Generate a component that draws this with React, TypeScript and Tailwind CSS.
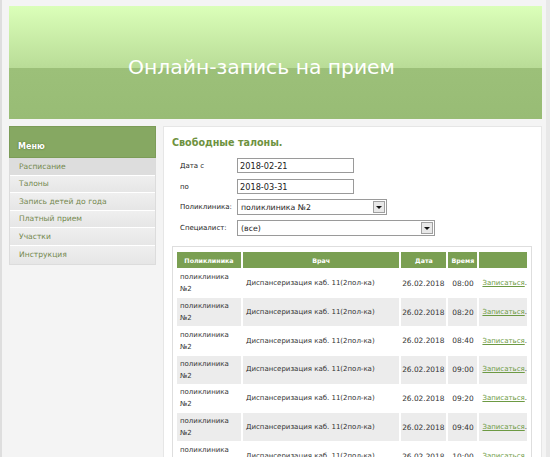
import React from "react";

const rows = ["08:00", "08:20", "08:40", "09:00", "09:20", "09:40", "10:00"];
const menu = ["Расписание", "Талоны", "Запись детей до года", "Платный прием", "Участки", "Инструкция"];

function Arrow() {
  return (
    <span className="absolute right-[1px] top-[1px] bottom-[1px] w-[12px] bg-[#e8e8e8] border border-[#a0a0a0] flex items-center justify-center">
      <svg width="6" height="3" viewBox="0 0 6 3"><path d="M0 0H6L3 3Z" fill="#111" /></svg>
    </span>
  );
}

export default function App() {
  return (
    <div className="w-[550px] h-[457px] overflow-hidden bg-[#f4f4f4] border-l-2 border-[#dedede] relative" style={{ fontFamily: '"DejaVu Sans", Verdana, sans-serif' }}>
      <div className="absolute right-0 top-0 bottom-0 w-[4px] bg-[#e8e8e8]" />
      <div className="pl-[7px] pr-[8px] pt-[6px]">
        <div className="h-[113px] relative overflow-hidden">
          <div className="h-[62px] bg-gradient-to-b from-[#dbffb9] to-[#b9dc97]" />
          <div className="h-[51px] bg-gradient-to-b from-[#9cc079] to-[#98bc75]" />
          <div className="absolute inset-0 flex items-center justify-center pt-[9px] pr-[28px] text-white text-[20.3px]">
            Онлайн-запись на прием
          </div>
        </div>
        <div className="flex gap-[7px] mt-[7px]">
          <div className="w-[147px] shrink-0">
            <div className="h-[32px] bg-[#86a862] border border-[#7c9c58] flex items-end pb-[4px] pl-[8px] text-white font-bold text-[8px]" style={{ textShadow: "0 0 2px #4b6a2d" }}>
              Меню
            </div>
            <div className="border-x border-b border-[#dcdcdc]">
              {menu.map((m, i) => (
                <div
                  key={m}
                  className={`h-[17.6px] flex items-center pl-[9px] text-[7.6px] text-[#75894f] border-b border-white last:border-b-0 ${i === 0 ? "bg-[#dddddd]" : "bg-gradient-to-b from-[#efefef] to-[#e6e6e6]"}`}
                >
                  {m}
                </div>
              ))}
            </div>
          </div>
          <div className="flex-1 bg-white border border-[#e6e6e6] h-[340px] pl-[8px] pr-[9px] pt-[9px]">
            <div className="text-[9.6px] font-bold text-[#6e9240]">Свободные талоны.</div>
            <div className="pl-[8px] mt-[8px] flex flex-col gap-[5px] text-[7px] text-[#222]">
              <div className="flex items-center h-[15px]">
                <span className="w-[57px]">Дата с</span>
                <div className="w-[117px] h-[15px] border border-[#9a9a9a] flex items-center pl-[2px] text-[8.2px]">2018-02-21</div>
              </div>
              <div className="flex items-center h-[15px] mt-[1px]">
                <span className="w-[57px]">по</span>
                <div className="w-[117px] h-[15px] border border-[#9a9a9a] flex items-center pl-[2px] text-[8.2px]">2018-03-31</div>
              </div>
              <div className="flex items-center h-[16px]">
                <span className="w-[57px]">Поликлиника:</span>
                <div className="relative w-[150px] h-[16px] border border-[#9a9a9a] flex items-center pl-[3px] text-[7.8px]">поликлиника №2<Arrow /></div>
              </div>
              <div className="flex items-center h-[16px]">
                <span className="w-[57px]">Специалист:</span>
                <div className="relative w-[198px] h-[16px] border border-[#9a9a9a] flex items-center pl-[3px] text-[7.8px]">(все)<Arrow /></div>
              </div>
            </div>
            <div className="mt-[10px] border border-[#dedede] pt-[4px] px-[2px] h-[220px]">
              <table className="border-separate border-spacing-x-[2px] border-spacing-y-[1.5px] text-[7px] text-[#333]">
                <thead>
                  <tr className="h-[16px] bg-[#7a9f52] text-white font-bold text-[6.3px]">
                    <th className="w-[64px] font-bold">Поликлиника</th>
                    <th className="w-[157px] font-bold">Врач</th>
                    <th className="w-[45px] font-bold">Дата</th>
                    <th className="w-[29px] font-bold">Время</th>
                    <th className="w-[47px]"></th>
                  </tr>
                </thead>
                <tbody>
                  {rows.map((t, i) => (
                    <tr key={t} className={`h-[27.8px] ${i % 2 === 1 ? "bg-[#ececec]" : "bg-white"}`}>
                      <td className="pl-[3px] leading-[12px] align-middle">поликлиника<br />№2</td>
                      <td className="pl-[3px]">Диспансеризация каб. 11(2пол-ка)</td>
                      <td className="text-right pr-[2px] text-[7.4px]">26.02.2018</td>
                      <td className="text-center text-[7.4px]">{t}</td>
                      <td className="pl-[3px]"><span className="text-[#6d9a43] underline">Записаться</span>.</td>
                    </tr>
                  ))}
                </tbody>
              </table>
            </div>
          </div>
        </div>
      </div>
    </div>
  );
}
